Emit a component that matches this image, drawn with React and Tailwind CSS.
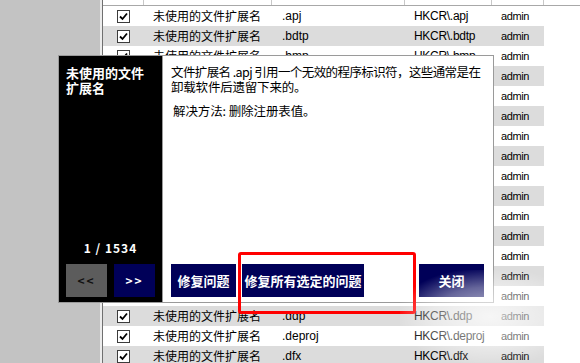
import React from "react";

const exts = [
  ".apj", ".bdtp", ".bmp", ".bpl", ".c", ".cab", ".cat", ".cdr", ".chm",
  ".cmd", ".cpl", ".crt", ".css", ".csv", ".dbg", ".ddp", ".deproj", ".dfx",
];

const latin = { fontFamily: '"Liberation Sans", Arial, sans-serif' };

function Check() {
  return (
    <div className="w-[13px] h-[13px] border border-[#3c3c3c] bg-white flex items-center justify-center">
      <svg width="9" height="9" viewBox="0 0 9 9">
        <path d="M1 4.5 L3.5 7 L8 1.5" stroke="#000" strokeWidth="1.8" fill="none" />
      </svg>
    </div>
  );
}

function Row({ ext, i }) {
  return (
    <div className={`flex h-[20px] items-center w-[441px] ${i % 2 === 1 ? "bg-[#dcdcdc]" : "bg-white"}`}>
      <div className="w-[41px] flex items-center pl-[14px]">
        <Check />
      </div>
      <div className="w-[128px] pl-[9px] text-[12px] whitespace-nowrap">未使用的文件扩展名</div>
      <div className="w-[133px] pl-[10px] text-[12px] whitespace-nowrap" style={latin}>{ext}</div>
      <div className="w-[87px] pl-[9px] text-[12px] whitespace-nowrap tracking-[-0.3px]" style={latin}>HKCR\{ext}</div>
      <div className="w-[52px] pl-[9px] text-[11px] whitespace-nowrap tracking-[-0.4px]" style={latin}>admin</div>
    </div>
  );
}

export default function App() {
  return (
    <div
      className="relative w-[580px] h-[363px] overflow-hidden flex bg-[#c3c3c3] text-black"
      style={{ fontFamily: '"Noto Sans CJK SC", "Noto Sans", sans-serif' }}
    >
      <div className="w-[100px] shrink-0" />
      <div className="w-[2px] shrink-0 bg-[#ececec]" />
      <div className="w-[1px] shrink-0 bg-[#707070]" />
      <div className="flex-1 bg-white flex flex-col leading-[20px]">
        <div className="flex h-[6px] border-b border-[#a8a8a8] shrink-0">
          <div className="w-[41px] border-r border-[#c8c8c8]" />
          <div className="w-[128px] border-r border-[#c8c8c8]" />
          <div className="w-[133px] border-r border-[#c8c8c8]" />
          <div className="w-[87px] border-r border-[#c8c8c8]" />
          <div className="w-[52px] border-r border-[#c8c8c8]" />
          <div className="flex-1" />
        </div>
        {exts.map((e, i) => (
          <Row key={e} ext={e} i={i} />
        ))}
      </div>

      {/* dialog */}
      <div className="absolute left-[58px] top-[55px] w-[436px] h-[248px] border border-[#9a9a9a] flex">
        <div className="w-[104px] shrink-0 bg-black border-r border-[#9a9a9a] flex flex-col justify-between px-[7px] pt-[9px] pb-[5px]">
          <div className="text-white font-bold text-[13px] leading-[15px]">未使用的文件扩展名</div>
          <div className="flex flex-col">
            <div className="text-white font-bold text-[12px] text-center tracking-[1px] mb-[9px] leading-[15px]">1 / 1534</div>
            <div className="flex gap-[7px]">
              <div className="w-[41px] h-[33px] bg-[#5c5c5c] text-[#111] font-bold text-[12px] flex items-center justify-center tracking-[2px]">&lt;&lt;</div>
              <div className="w-[41px] h-[33px] bg-[#000058] text-white font-bold text-[12px] flex items-center justify-center tracking-[2px]">&gt;&gt;</div>
            </div>
          </div>
        </div>
        <div className="flex-1 min-w-0 bg-white flex flex-col justify-between pl-[8px] pr-[9px] pt-[8px] pb-[5px]">
          <div className="text-[12.5px] leading-[15px]">
            <div className="whitespace-nowrap tracking-[-0.6px]">文件扩展名 .apj 引用一个无效的程序标识符，这些通常是在</div>
            <div className="whitespace-nowrap tracking-[-0.2px]">卸载软件后遗留下来的。</div>
            <div className="mt-[9px] pl-[2px] whitespace-nowrap tracking-[-0.1px]">解决方法: 删除注册表值。</div>
          </div>
          <div className="flex justify-between">
            <div className="flex gap-[6px]">
              <div className="w-[65px] h-[33px] bg-[#000058] text-white font-bold text-[13px] flex items-center justify-center">修复问题</div>
              <div className="w-[122px] h-[33px] bg-[#000058] text-white font-bold text-[13px] flex items-center justify-center whitespace-nowrap">修复所有选定的问题</div>
            </div>
            <div className="w-[65px] h-[33px] bg-[#000058] text-white font-bold text-[13px] flex items-center justify-center">关闭</div>
          </div>
        </div>
      </div>

      {/* red highlight */}
      <div className="absolute left-[238px] top-[252px] w-[178px] h-[62px] border-[3px] border-[#f00] rounded-[3px]" />

      {/* watermark haze */}
      <div className="absolute left-[400px] top-[270px] w-[180px] h-[93px] bg-[radial-gradient(ellipse_at_center,rgba(255,255,255,0.75)_0%,rgba(255,255,255,0.4)_45%,rgba(255,255,255,0)_75%)]" />
    </div>
  );
}
